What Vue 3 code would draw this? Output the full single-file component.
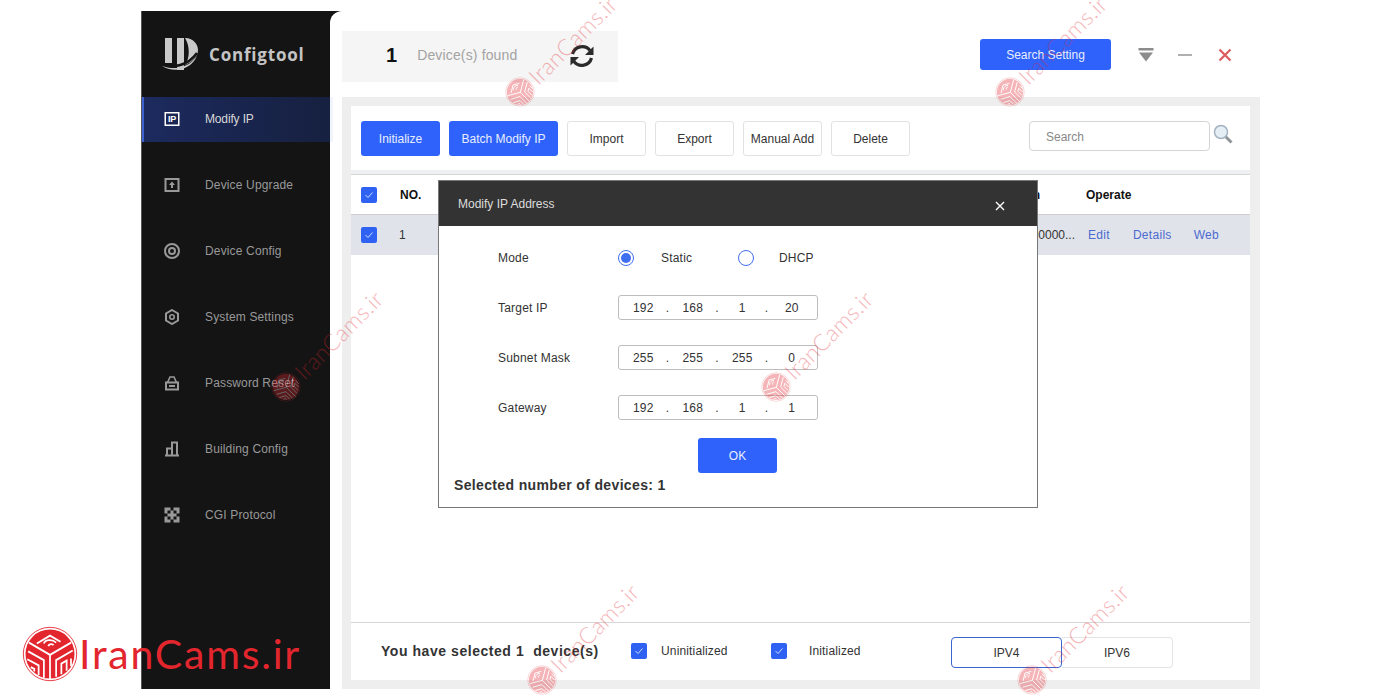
<template>
  <div class="page">
    <svg class="defs" width="0" height="0">
      <symbol id="brand" viewBox="0 0 64 64">
        <circle cx="32" cy="32" r="30.500" fill="none" stroke="#e3262e" stroke-width="1" />
        <circle cx="32" cy="32" r="28" fill="#e3262e" />
        <g fill="none" stroke="#fff" stroke-width="2">
          <path d="M32 33 L8 19 M32 33 L56 19 M32 33 V61" />
          <path d="M17 20 L32 11 L44 18 M25 20 C26 16 34 14 39 19 M30 23 C31 20 35 20 36 22" />
          <path d="M7 29 L25 39 V59 M6 38 L19 45 V56 M10 47 L14 49 V52" />
          <path d="M39 58 V39 L58 28 M45 55 V43 L51 39.500 V51 M56 46 V37" />
        </g>
      </symbol>
      <symbol id="i-upgrade" viewBox="0 0 16 16">
        <rect x="1.500" y="2" width="13" height="12" fill="none" stroke="currentColor" stroke-width="2" />
        <path d="M8 4.500 L11 8 H9 V11 H7 V8 H5 Z" fill="currentColor" />
      </symbol>
      <symbol id="i-config" viewBox="0 0 16 16">
        <circle cx="8" cy="8" r="7" fill="none" stroke="currentColor" stroke-width="2" />
        <circle cx="8" cy="8" r="3" fill="none" stroke="currentColor" stroke-width="2" />
      </symbol>
      <symbol id="i-settings" viewBox="0 0 16 16">
        <path d="M8 1 L14 4.500 V11.500 L8 15 L2 11.500 V4.500 Z" fill="none" stroke="currentColor" stroke-width="2" />
        <circle cx="8" cy="8" r="2.200" fill="none" stroke="currentColor" stroke-width="1.600" />
      </symbol>
      <symbol id="i-lock" viewBox="0 0 16 16">
        <path d="M3.500 7.500 L6 2 H10 L12.500 7.500" fill="none" stroke="currentColor" stroke-width="1.600" />
        <rect x="2" y="7.500" width="12" height="7" fill="none" stroke="currentColor" stroke-width="2" />
        <rect x="5" y="10" width="6" height="2" fill="currentColor" />
      </symbol>
      <symbol id="i-building" viewBox="0 0 16 16">
        <path d="M1 14.500 H15 M3 14 V7.500 H8 V14 M8 7 V1.500 H13 V14" fill="none" stroke="currentColor" stroke-width="2" />
      </symbol>
      <symbol id="i-cgi" viewBox="0 0 16 16">
        <path fill="currentColor" d="M.5 .5 H6.500 V3.500 H.5 Z M9.500 .5 H15.500 V3.500 H9.500 Z M.5 3.500 H3.500 V6.500 H.5 Z M6.500 3.500 H9.500 V6.500 H6.500 Z M12.500 3.500 H15.500 V6.500 H12.500 Z M3.500 6.500 H12.500 V9.500 H3.500 Z M.5 9.500 H3.500 V12.500 H.5 Z M6.500 9.500 H9.500 V12.500 H6.500 Z M12.500 9.500 H15.500 V12.500 H12.500 Z M.5 12.500 H6.500 V15.500 H.5 Z M9.500 12.500 H15.500 V15.500 H9.500 Z" />
      </symbol>
    </svg>

    <div class="window">
      <aside class="sidebar">
        <div class="brand-row">
          <svg class="app-logo" width="40" height="40" viewBox="0 0 40 40">
            <rect x="5" y="4" width="7" height="25" fill="#c9c9c9" />
            <rect x="17" y="4" width="7" height="32" fill="#c9c9c9" />
            <path d="M25 4 C34 4 38 11 38 16 C38 23 32 28 25 31 C30 24 30 12 25 4 Z" fill="#c9c9c9" />
            <path d="M1 30 C12 34 27 33 37 19" fill="none" stroke="#141414" stroke-width="2.500" />
            <path d="M2 32 C13 36 28 35 37 22 C30 38 11 38 2 32 Z" fill="#c9c9c9" />
          </svg>
          <span class="app-name">Configtool</span>
        </div>
        <nav class="nav">
          <div class="nav-item active">
            <svg class="nav-icon" width="16" height="16" viewBox="0 0 16 16">
              <rect x="0.500" y="1" width="15" height="14" fill="#fff" />
              <rect x="2" y="2.500" width="12" height="11" fill="#1a2755" />
              <text x="8" y="11" text-anchor="middle" class="ip-glyph">IP</text>
            </svg>
            <span>Modify IP</span>
          </div>
          <div v-for="item in navItems" :key="item.label" class="nav-item">
            <svg class="nav-icon" width="16" height="16"><use :href="'#i-' + item.icon" /></svg>
            <span>{{ item.label }}</span>
          </div>
        </nav>
      </aside>

      <main class="main">
        <header class="topbar">
          <div class="found">
            <b class="found-count">1</b>
            <span class="found-label">Device(s) found</span>
            <svg class="refresh" width="26" height="26" viewBox="0 0 26 26">
              <path d="M3.500 11 A10 10 0 0 1 21 7.500" fill="none" stroke="#2b2b2b" stroke-width="3.200" />
              <path d="M24.500 3.500 V12 H16 Z" fill="#2b2b2b" />
              <path d="M22.500 15 A10 10 0 0 1 5 18.500" fill="none" stroke="#2b2b2b" stroke-width="3.200" />
              <path d="M1.500 22.500 V14 H10 Z" fill="#2b2b2b" />
            </svg>
          </div>
          <button class="btn primary search-setting">Search Setting</button>
          <div class="win-icons">
            <svg width="16" height="16" viewBox="0 0 16 16">
              <rect x="0.500" y="1" width="15" height="2.500" fill="#8c8c8c" />
              <path d="M1 5.500 H15 L8 14.500 Z" fill="#8c8c8c" />
            </svg>
            <svg width="16" height="16" viewBox="0 0 16 16">
              <rect x="1" y="7" width="14" height="2" fill="#b0b0b0" />
            </svg>
            <svg width="16" height="16" viewBox="0 0 16 16">
              <path d="M2.500 2.500 L13.500 13.500 M13.500 2.500 L2.500 13.500" stroke="#dc5b5e" stroke-width="2.200" />
            </svg>
          </div>
        </header>

        <section class="content">
          <div class="panel">
            <div class="toolbar">
              <button class="btn primary">Initialize</button>
              <button class="btn primary wide">Batch Modify IP</button>
              <button v-for="b in toolButtons" :key="b" class="btn plain">{{ b }}</button>
              <div class="search">
                <div class="search-input">Search</div>
                <svg width="20" height="20" viewBox="0 0 20 20">
                  <path d="M12.500 12.500 L18.500 18.500" stroke="#8f9498" stroke-width="3" />
                  <circle cx="8" cy="8" r="6.500" fill="#e6eef5" stroke="#a3b2c0" stroke-width="1.500" />
                </svg>
              </div>
            </div>
            <div class="band"></div>

            <div class="tr head">
              <span class="check"><svg width="10" height="10" viewBox="0 0 10 10"><path d="M1.500 5 L4 7.500 L8.500 2.500" fill="none" stroke="#cfdcff" stroke-width="1" /></svg></span>
              <span class="col-no">NO.</span>
              <span class="col-version">Version</span>
              <span class="col-ops">Operate</span>
            </div>
            <div class="tr row">
              <span class="check"><svg width="10" height="10" viewBox="0 0 10 10"><path d="M1.500 5 L4 7.500 L8.500 2.500" fill="none" stroke="#cfdcff" stroke-width="1" /></svg></span>
              <span class="col-no">1</span>
              <span class="col-version">V2.800.00000...</span>
              <span class="col-ops links">
                <a>Edit</a>
                <a>Details</a>
                <a>Web</a>
              </span>
            </div>

            <div class="spacer"></div>

            <footer class="footer">
              <span class="selected">You have selected 1&nbsp; device(s)</span>
              <label class="filter first">
                <span class="check"><svg width="10" height="10" viewBox="0 0 10 10"><path d="M1.500 5 L4 7.500 L8.500 2.500" fill="none" stroke="#cfdcff" stroke-width="1" /></svg></span>
                <span class="filter-text">Uninitialized</span>
              </label>
              <label class="filter second">
                <span class="check"><svg width="10" height="10" viewBox="0 0 10 10"><path d="M1.500 5 L4 7.500 L8.500 2.500" fill="none" stroke="#cfdcff" stroke-width="1" /></svg></span>
                <span class="filter-text far">Initialized</span>
              </label>
              <div class="ip-tabs">
                <button class="ip-tab on">IPV4</button>
                <button class="ip-tab">IPV6</button>
              </div>
            </footer>
          </div>
        </section>

        <div class="modal">
          <div class="modal-head">
            <span>Modify IP Address</span>
            <svg width="10" height="10" viewBox="0 0 10 10">
              <path d="M1 1 L9 9 M9 1 L1 9" stroke="#fff" stroke-width="1.400" />
            </svg>
          </div>
          <div class="modal-body">
            <div class="form-row">
              <span class="form-label">Mode</span>
              <span class="radio on"></span>
              <span class="radio-text static">Static</span>
              <span class="radio"></span>
              <span class="radio-text">DHCP</span>
            </div>
            <div v-for="f in ipFields" :key="f.label" class="form-row">
              <span class="form-label">{{ f.label }}</span>
              <div class="ip-field">
                <template v-for="(part, i) in f.parts" :key="i">
                  <span class="octet">{{ part }}</span>
                  <span v-if="i < 3" class="dot">.</span>
                </template>
              </div>
            </div>
            <button class="btn primary ok">OK</button>
            <div class="modal-count">Selected number of devices: 1</div>
          </div>
        </div>
      </main>
    </div>

    <!-- watermarks sit on top of everything -->
    <div v-for="w in watermarks" :key="w.x" class="wm" :style="{ left: w.x + 'px', top: w.y + 'px' }">
      <svg width="30" height="30"><use href="#brand" /></svg>
      <span>IranCams.ir</span>
    </div>
    <div class="corner-brand">
      <svg width="56" height="56"><use href="#brand" /></svg>
      <span>IranCams.ir</span>
    </div>
  </div>
</template>

<script setup>
const navItems = [
  { label: 'Device Upgrade', icon: 'upgrade' },
  { label: 'Device Config', icon: 'config' },
  { label: 'System Settings', icon: 'settings' },
  { label: 'Password Reset', icon: 'lock' },
  { label: 'Building Config', icon: 'building' },
  { label: 'CGI Protocol', icon: 'cgi' },
]

const toolButtons = ['Import', 'Export', 'Manual Add', 'Delete']

const ipFields = [
  { label: 'Target IP', parts: [192, 168, 1, 20] },
  { label: 'Subnet Mask', parts: [255, 255, 255, 0] },
  { label: 'Gateway', parts: [192, 168, 1, 1] },
]

const watermarks = [
  { x: 505, y: 77 },
  { x: 995, y: 77 },
  { x: 271, y: 372 },
  { x: 761, y: 372 },
  { x: 527, y: 665 },
  { x: 1017, y: 665 },
]
</script>

<style>
html,
body {
  margin: 0;
  background: #fff;
}
</style>

<style scoped>
.page {
  position: relative;
  width: 1400px;
  height: 700px;
  padding: 11px 0 0 141px;
  box-sizing: border-box;
  overflow: hidden;
  background: #fff;
  font-family: "Liberation Sans", Arial, sans-serif;
  font-size: 12px;
  color: #333;
}

.defs {
  position: absolute;
}

.window {
  display: flex;
  width: 1119px;
  height: 678px;
  background: #141414;
}

/* sidebar */
.sidebar {
  position: relative;
  z-index: 1;
  width: 189px;
  flex-shrink: 0;
  border-left: 1px solid #555;
  box-sizing: border-box;
  background: #141414;
}

.brand-row {
  display: flex;
  align-items: center;
  height: 86px;
  padding-left: 18px;
  box-sizing: border-box;
}

.app-name {
  margin: 0 0 0 9px;
  font-family: "Open Sans", sans-serif;
  font-size: 17px;
  font-weight: 700;
  letter-spacing: 0.8px;
  color: #c4c4c4;
}

.nav-item {
  position: relative;
  display: flex;
  align-items: center;
  height: 45px;
  margin-bottom: 21px;
  padding: 0 0 2px 22px;
  box-sizing: border-box;
  color: #999;
  letter-spacing: 0.15px;
}

.nav-item.active {
  padding-left: 20px;
  border-left: 2px solid #3b62d0;
  background: linear-gradient(90deg, #1c2a5e, #16203f);
  color: #d8d8d8;
  letter-spacing: -0.15px;
}

/* the highlight runs a little past the sidebar edge */
.nav-item.active::after {
  content: "";
  position: absolute;
  left: 100%;
  top: 0;
  width: 3px;
  height: 100%;
  background: #f1f4fb;
}

.nav-icon {
  margin-right: 25px;
  flex-shrink: 0;
}

.ip-glyph {
  font-family: "Liberation Sans", sans-serif;
  font-size: 9px;
  font-weight: 700;
  fill: #fff;
}

/* main area */
.main {
  position: relative;
  display: flex;
  flex-direction: column;
  flex: 1;
  background: #fff;
  border-top-left-radius: 12px;
}

.topbar {
  display: flex;
  align-items: flex-start;
  height: 86px;
  padding: 20px 0 0 12px;
  box-sizing: border-box;
}

.found {
  display: flex;
  align-items: center;
  width: 276px;
  height: 51px;
  padding-bottom: 3px;
  box-sizing: border-box;
  background: #f5f5f5;
}

.found-count {
  margin-left: 44px;
  font-size: 20px;
  color: #111;
}

.found-label {
  margin-left: 20px;
  font-size: 14px;
  letter-spacing: 0.15px;
  color: #a3a3a3;
}

.refresh {
  margin: 1px 0 0 52px;
}

.btn {
  height: 35px;
  padding: 0;
  border-radius: 3px;
  font-family: inherit;
  font-size: 12px;
}

.btn.primary {
  width: 79px;
  border: none;
  background: #2f62fb;
  color: #e8eeff;
}

.btn.primary.wide {
  width: 109px;
}

.btn.plain {
  width: 79px;
  border: 1px solid #e2e2e2;
  background: #fff;
  color: #333;
}

.search-setting.primary {
  width: 131px;
  height: 31px;
  margin: 8px 0 0 362px;
}

.win-icons {
  display: flex;
  gap: 23px;
  margin: 16px 0 0 27px;
}

.win-icons svg:last-child {
  margin-left: 1px;
}

.content {
  flex: 1;
  margin-left: 12px;
  padding: 9px 10px 9px 9px;
  background: #eee;
  display: flex;
  min-height: 0;
}

.panel {
  display: flex;
  flex-direction: column;
  flex: 1;
  background: #fff;
}

.toolbar {
  display: flex;
  align-items: flex-start;
  gap: 9px;
  height: 64px;
  padding: 15px 0 0 10px;
  box-sizing: border-box;
}

.search {
  display: flex;
  gap: 3px;
  margin-left: 110px;
}

.search-input {
  width: 181px;
  height: 30px;
  padding-left: 16px;
  box-sizing: border-box;
  border: 1px solid #d4d4d4;
  border-radius: 4px;
  line-height: 30px;
  color: #888;
}

.search svg {
  margin-top: 3px;
}

.band {
  height: 4px;
  background: #eef0f3;
  border-bottom: 1px solid #d6d6d6;
}

.tr {
  display: flex;
  align-items: center;
  padding-left: 10px;
}

.tr.head {
  height: 39px;
  font-weight: 700;
  color: #111;
}

.tr.row {
  height: 41px;
  background: #e1e3ea;
  border-top: 1px solid #cfcfcf;
  box-sizing: border-box;
}

.check {
  display: inline-flex;
  align-items: center;
  justify-content: center;
  flex-shrink: 0;
  width: 16px;
  height: 16px;
  border-radius: 2px;
  background: #2f62f2;
}

.col-no {
  margin-left: 23px;
  flex: 1;
}

.tr.row .col-no {
  margin-left: 22px;
}

.col-version {
  width: 94px;
  margin-right: 11px;
  overflow: hidden;
  white-space: nowrap;
  text-align: right;
}

.tr.head .col-version {
  margin-right: 46px;
  width: 59px;
}

.col-ops {
  width: 164px;
  flex-shrink: 0;
}

.links {
  display: flex;
  letter-spacing: 0.3px;
  color: #4a6bd0;
}

.links a:nth-child(1) {
  margin: 0 23px 0 2px;
}

.links a:nth-child(2) {
  margin-right: 22px;
}

.spacer {
  flex: 1;
}

.footer {
  display: flex;
  align-items: center;
  height: 58px;
  padding: 0 0 2px 30px;
  box-sizing: border-box;
  border-top: 1px solid #d6d6d6;
}

.selected {
  width: 250px;
  font-size: 14px;
  font-weight: 700;
  letter-spacing: 0.55px;
  color: #333;
}

.filter {
  display: flex;
  align-items: center;
  width: 140px;
  letter-spacing: 0.15px;
}

.filter-text {
  margin-left: 14px;
}

.filter-text.far {
  margin-left: 22px;
}

.ip-tabs {
  display: flex;
  margin: 4px 0 0 40px;
}

.ip-tab {
  width: 111px;
  height: 31px;
  padding: 0;
  border: 1px solid #e4e4e4;
  border-left: none;
  border-radius: 0 4px 4px 0;
  background: #fff;
  font-family: inherit;
  font-size: 12px;
  color: #333;
}

.ip-tab.on {
  border: 1px solid #3a66cf;
  border-radius: 4px;
}

/* dialog */
.modal {
  position: absolute;
  left: 108px;
  top: 169px;
  width: 600px;
  height: 328px;
  box-sizing: border-box;
  border: 1px solid #777;
  background: #fff;
}

.modal-head {
  display: flex;
  align-items: center;
  justify-content: space-between;
  height: 45px;
  padding: 0 32px 0 19px;
  background: #333;
  color: #ddd;
}

.modal-head svg {
  margin-top: 4px;
}

.modal-body {
  display: flex;
  flex-direction: column;
  padding: 7px 0 0 59px;
}

.form-row {
  display: flex;
  align-items: center;
  height: 50px;
  letter-spacing: 0.2px;
  color: #333;
}

.form-label {
  width: 120px;
}

.radio {
  width: 14px;
  height: 14px;
  border: 1px solid #3f6ef0;
  border-radius: 50%;
  position: relative;
}

.radio.on::after {
  content: "";
  position: absolute;
  inset: 2px;
  border-radius: 50%;
  background: #3f6ef0;
}

.radio-text {
  margin-left: 25px;
}

.radio-text.static {
  width: 77px;
  margin-left: 27px;
}

.ip-field {
  display: flex;
  width: 200px;
  height: 25px;
  margin-top: -1px;
  box-sizing: border-box;
  border: 1px solid #bdbdbd;
  border-radius: 3px;
  line-height: 25px;
}

.octet {
  flex: 1;
  padding-right: 1px;
  text-align: center;
}

.dot {
  display: flex;
  justify-content: center;
  width: 0;
  margin-left: -1px;
  margin-right: 1px;
  overflow: visible;
  line-height: 25px;
}

.btn.ok {
  align-self: flex-start;
  margin: 5px 0 0 200px;
}

.modal-count {
  margin: 4px 0 0 -44px;
  font-size: 14px;
  font-weight: 700;
  letter-spacing: 0.35px;
  line-height: 16px;
  color: #333;
}

/* overlays */
.wm {
  position: absolute;
  z-index: 2;
  display: flex;
  align-items: center;
  gap: 2px;
  transform: rotate(-45deg);
  transform-origin: 15px 15px;
  opacity: 0.34;
  font-family: Lato, sans-serif;
  font-size: 23px;
  font-weight: 300;
  letter-spacing: 0.3px;
  color: #e3262e;
  white-space: nowrap;
  pointer-events: none;
}

.corner-brand {
  position: absolute;
  z-index: 2;
  left: 22px;
  top: 626px;
  display: flex;
  align-items: center;
  font-family: Lato, sans-serif;
  font-size: 41px;
  letter-spacing: 1.8px;
  line-height: 56px;
  color: #e3262e;
  white-space: nowrap;
}

.corner-brand span {
  margin-left: 1px;
}
</style>
